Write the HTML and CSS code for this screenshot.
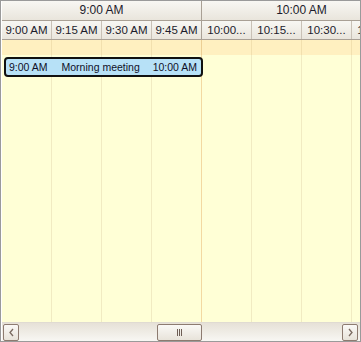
FILE: index.html
```html
<!DOCTYPE html>
<html>
<head lang="en">
  <meta charset="UTF-8">
  <title>Scheduler</title>
  <link rel="stylesheet" href="styles.css">
</head>
<body>
<div class="scheduler">
  <div class="hours">
    <div class="hour">9:00 AM</div>
    <div class="hour">10:00 AM</div>
  </div>
  <div class="slots">
    <div class="slot">9:00 AM</div>
    <div class="slot">9:15 AM</div>
    <div class="slot">9:30 AM</div>
    <div class="slot hour-end">9:45 AM</div>
    <div class="slot">10:00...</div>
    <div class="slot">10:15...</div>
    <div class="slot">10:30...</div>
    <div class="slot">10:45...</div>
  </div>
  <div class="allday">
    <div class="cell"></div><div class="cell"></div><div class="cell"></div><div class="cell hour-end"></div>
    <div class="cell"></div><div class="cell"></div><div class="cell"></div><div class="cell"></div>
  </div>
  <div class="grid">
    <div class="col"></div><div class="col"></div><div class="col"></div><div class="col hour-end"></div>
    <div class="col"></div><div class="col"></div><div class="col"></div><div class="col"></div>
    <!-- 预约块浮在网格上面 -->
    <div class="appt">
      <span>9:00 AM</span>
      <span class="appt-title">Morning meeting</span>
      <span>10:00 AM</span>
    </div>
  </div>
  <div class="hscroll">
    <div class="btn">
      <svg width="7" height="9" viewBox="0 0 7 9"><path d="M5 1 L2 4.5 L5 8" fill="none" stroke="#7a6a60" stroke-width="1.3"/></svg>
    </div>
    <div class="track">
      <div class="thumb"><span class="grip"></span></div>
    </div>
    <div class="btn">
      <svg width="7" height="9" viewBox="0 0 7 9"><path d="M2 1 L5 4.5 L2 8" fill="none" stroke="#7a6a60" stroke-width="1.3"/></svg>
    </div>
  </div>
</div>
</body>
</html>
```

FILE: styles.css
```css
* {
  margin: 0;
  padding: 0;
  box-sizing: border-box;
}

body {
  font-family: "Liberation Sans", Arial, sans-serif;
  font-size: 11px;
  color: #1c1c2c;
}

.scheduler {
  width: 361px;
  height: 342px;
  border: 1px solid #9a9a9a;
  padding-left: 1px;
  display: flex;
  flex-direction: column;
  overflow: hidden;
  background-color: #fff;
}

.hours,
.slots {
  display: flex;
  background: linear-gradient(#f8f7f3, #e9e5dc);
  border-bottom: 1px solid #a9a095;
}

.hours {
  height: 20px;
}

.hour {
  flex: 0 0 200px;
  border-right: 1px solid #a9a095;
  text-align: center;
  line-height: 19px;
  font-size: 12px;
}

.slots {
  height: 19px;
}

.slot {
  flex: 0 0 50px;
  border-right: 1px solid #c9c1b6;
  text-align: center;
  line-height: 18px;
  font-size: 11.5px;
  white-space: nowrap;
  overflow: hidden;
}

.slot.hour-end {
  border-right-color: #a9a095;
}

.allday {
  display: flex;
  height: 15px;
  background-color: #fff0c0;
}

.cell {
  flex: 0 0 50px;
  border-right: 1px solid #f2e0ae;
}

.cell.hour-end {
  border-right-color: #eccf94;
}

.grid {
  flex: 1;
  display: flex;
  position: relative;
  background-color: #ffffd6;
}

.col {
  flex: 0 0 50px;
  border-right: 1px solid #f1ebc2;
}

.col.hour-end {
  border-right-color: #f3d9a2;
}

.appt {
  position: absolute;
  left: 2px;
  top: 2px;
  width: 199px;
  height: 20px;
  border: 2px solid #111;
  border-radius: 4px;
  background-color: #b7e1f7;
  display: flex;
  align-items: center;
  justify-content: space-between;
  padding: 0 4px 0 3px;
  font-size: 10.5px;
  color: #101028;
  white-space: nowrap;
}

.appt-title {
  flex: 1;
  padding-left: 14px;
}

.hscroll {
  height: 19px;
  display: flex;
  align-items: center;
  padding: 0 2px 0 1px;
  background: linear-gradient(#e6e1d7, #f8f7f3);
  border-top: 1px solid #e0dbd2;
}

.btn {
  width: 16px;
  height: 17px;
  border: 1px solid #8d7b70;
  border-radius: 2px;
  background: linear-gradient(#faf9f6, #e8e3da);
  display: flex;
  align-items: center;
  justify-content: center;
}

.track {
  flex: 1;
  height: 17px;
  position: relative;
}

.thumb {
  position: absolute;
  left: 138px;
  top: 0;
  width: 45px;
  height: 17px;
  border: 1px solid #8d7b70;
  border-radius: 2px;
  background: linear-gradient(#faf9f6, #e8e3da);
  display: flex;
  align-items: center;
  justify-content: center;
}

.grip {
  width: 5px;
  height: 7px;
  border-left: 1px solid #6e5e55;
  border-right: 1px solid #6e5e55;
  position: relative;
}

.grip::after {
  content: "";
  position: absolute;
  left: 1px;
  top: 0;
  width: 1px;
  height: 7px;
  background-color: #6e5e55;
}
```
